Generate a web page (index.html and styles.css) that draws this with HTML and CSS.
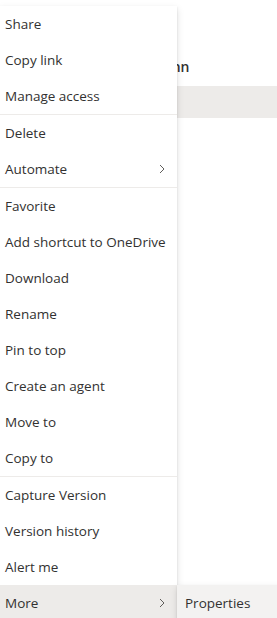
FILE: index.html
```
<!DOCTYPE html>
<html lang="en">
  <head>
    <title>Document library</title>
  <link rel="stylesheet" href="styles.css">
  </head>
  <body>
  <div class="library">
    <div class="list-header">
      <span class="column-name">Column</span>
    </div>
    <div class="list-row selected"></div>
    <div class="list-row"></div>
  </div>

  <div class="context-menu">
    <div class="menu-group">
      <div class="menu-item">Share</div>
      <div class="menu-item">Copy link</div>
      <div class="menu-item">Manage access</div>
    </div>
    <div class="menu-group">
      <div class="menu-item">Delete</div>
      <div class="menu-item has-sub">Automate
        <svg class="chevron" width="8" height="12" viewBox="0 0 8 12"><path d="M2 2l4 4-4 4" fill="none" stroke="currentColor" stroke-width="1"/></svg>
      </div>
    </div>
    <div class="menu-group">
      <div class="menu-item">Favorite</div>
      <div class="menu-item">Add shortcut to OneDrive</div>
      <div class="menu-item">Download</div>
      <div class="menu-item">Rename</div>
      <div class="menu-item">Pin to top</div>
      <div class="menu-item">Create an agent</div>
      <div class="menu-item">Move to</div>
      <div class="menu-item">Copy to</div>
    </div>
    <div class="menu-group">
      <div class="menu-item">Capture Version</div>
      <div class="menu-item">Version history</div>
      <div class="menu-item">Alert me</div>
      <div class="menu-item has-sub expanded">More
        <svg class="chevron" width="8" height="12" viewBox="0 0 8 12"><path d="M2 2l4 4-4 4" fill="none" stroke="currentColor" stroke-width="1"/></svg>
      </div>
    </div>
  </div>

  <div class="sub-menu">
    <div class="menu-item active">Properties</div>
  </div>
  </body></html>
```

FILE: styles.css
```
:root {
  --text: #323130;
  --muted: #605e5c;
  --divider: #edebe9;
  --hover: #edebe9;
  --light: #ffffff;
}

* {
  margin: 0;
  padding: 0;
  box-sizing: border-box;
  font-family: 'Open Sans', 'Noto Sans', sans-serif;
}

body {
  background: var(--light);
  color: var(--text);
  overflow: hidden;
  height: 618px;
}

.library {
  padding-top: 46px;
}

.list-header {
  height: 40px;
  padding-left: 137px;
  display: flex;
  align-items: center;
}

.column-name {
  font-size: 14px;
  font-weight: 600;
  color: var(--text);
}

.list-row {
  height: 32px;
  margin-left: 120px;
}

.list-row.selected {
  background: #edebe9;
}

.context-menu {
  position: absolute;
  top: 6px;
  left: 0;
  width: 177px;
  background: var(--light);
  box-shadow: 0 3.2px 7.2px rgba(0,0,0,0.13), 0 0.6px 1.8px rgba(0,0,0,0.11);
}

.menu-group + .menu-group {
  border-top: 1px solid var(--divider);
}

.menu-item {
  height: 36px;
  padding: 0 8px 0 5px;
  display: flex;
  align-items: center;
  justify-content: space-between;
  font-size: 13.5px;
  color: var(--text);
  white-space: nowrap;
}

.menu-item.expanded {
  background: var(--hover);
}

.chevron {
  color: var(--muted);
  margin-right: 3px;
}

.sub-menu {
  position: absolute;
  top: 585px;
  left: 177px;
  width: 110px;
  background: var(--light);
  box-shadow: 0 3.2px 7.2px rgba(0,0,0,0.13), 0 0.6px 1.8px rgba(0,0,0,0.11);
}

.sub-menu .menu-item {
  padding-left: 8px;
}

.menu-item.active {
  background: #f3f2f1;
}
```
